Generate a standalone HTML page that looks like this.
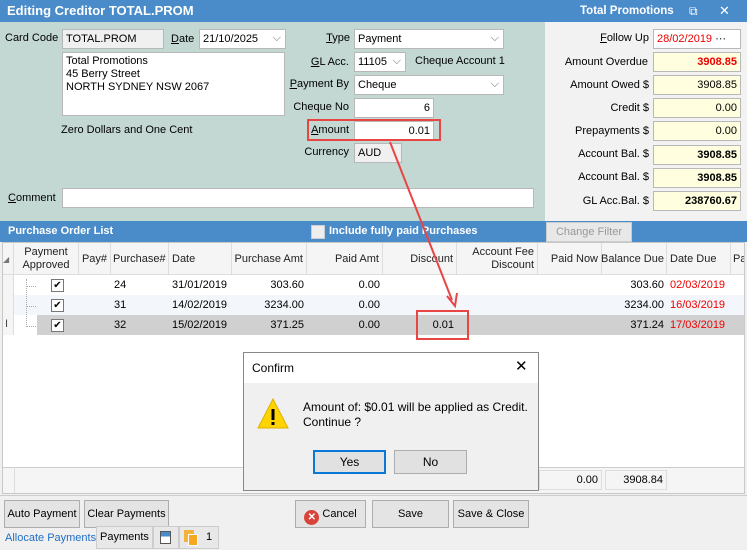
<!DOCTYPE html>
<html><head><style>
*{box-sizing:border-box;margin:0;padding:0}
body{width:747px;height:550px;overflow:hidden;font-family:"Liberation Sans",sans-serif;font-size:11px;color:#000;background:#f0f0f0;position:relative}
.a{position:absolute}
.lbl{position:absolute;font-size:11px;white-space:nowrap}
.lr{position:absolute;font-size:11px;white-space:nowrap;text-align:right}
.in{position:absolute;background:#fff;border:1px solid #b8b8b8;height:20px;padding:0 3px;line-height:18px;font-size:11px;white-space:nowrap;overflow:hidden}
.y{background:#ffffe0}
.r{text-align:right}
.dd::after{content:"⌵";position:absolute;right:4px;top:-1px;color:#666;font-size:11px}
.btn{position:absolute;background:#e4e4e4;border:1px solid #adadad;text-align:center;font-size:11px;line-height:26px;height:28px;white-space:nowrap}
.hd{position:absolute;top:243px;height:32px;border-right:1px solid #ddd;font-size:11px;color:#222;display:flex;align-items:center;line-height:13px;white-space:nowrap}
.cell{position:absolute;font-size:11px;height:20px;line-height:20px;white-space:nowrap}
.cb{position:absolute;width:13px;height:13px;border:1px solid #777;background:#fff;font-size:10px;line-height:11px;text-align:center}
</style></head><body>
<div class="a" style="left:0;top:0;width:747px;height:22px;background:#4a8bca"></div>
<div class="lbl" style="left:7px;top:3px;color:#fff;font-weight:bold;font-size:13px">Editing Creditor TOTAL.PROM</div>
<div class="lbl" style="left:580px;top:5px;color:#fff;font-weight:bold;font-size:11.5px">Total Promotions</div>
<div class="lbl" style="left:689px;top:4px;color:#fff;font-size:12px">⧉</div>
<div class="lbl" style="left:719px;top:3px;color:#fff;font-size:13px">✕</div>
<div class="a" style="left:0;top:22px;width:545px;height:199px;background:#c3d8d3"></div>
<div class="a" style="left:545px;top:22px;width:202px;height:199px;background:#f2f2f2"></div>
<div class="lbl" style="left:5px;top:32px">Card Code</div>
<div class="in" style="left:62px;top:29px;width:102px;background:#f0f0f0">TOTAL.PROM</div>
<div class="lbl" style="left:171px;top:33px"><u>D</u>ate</div>
<div class="in dd" style="left:199px;top:29px;width:87px">21/10/2025</div>
<div class="in" style="left:62px;top:52px;width:223px;height:64px;line-height:13px;padding-top:2px">Total Promotions<br>45 Berry Street<br>NORTH SYDNEY NSW 2067</div>
<div class="lbl" style="left:61px;top:124px">Zero Dollars and One Cent</div>
<div class="lbl" style="left:8px;top:192px"><u>C</u>omment</div>
<div class="in" style="left:62px;top:188px;width:472px"></div>
<div class="lr" style="right:397px;top:32px"><u>T</u>ype</div>
<div class="in dd" style="left:354px;top:29px;width:150px">Payment</div>
<div class="lr" style="right:398px;top:56px"><u>G</u>L Acc.</div>
<div class="in dd" style="left:354px;top:52px;width:52px">11105</div>
<div class="lbl" style="left:415px;top:55px">Cheque Account 1</div>
<div class="lr" style="right:398px;top:78px"><u>P</u>ayment By</div>
<div class="in dd" style="left:354px;top:75px;width:150px">Cheque</div>
<div class="lr" style="right:398px;top:101px">Cheque No</div>
<div class="in r" style="left:354px;top:98px;width:80px">6</div>
<div class="lr" style="right:398px;top:124px"><u>A</u>mount</div>
<div class="in r" style="left:354px;top:121px;width:80px">0.01</div>
<div class="lr" style="right:398px;top:146px">Currency</div>
<div class="in" style="left:354px;top:143px;width:48px;background:#f0f0f0">AUD</div>
<div class="a" style="left:307px;top:119px;width:134px;height:22px;border:2px solid #e84545"></div>
<div class="lr" style="right:98px;top:32px"><u>F</u>ollow Up</div>
<div class="in" style="left:653px;top:29px;width:88px;color:#e00">28/02/2019 <span style="color:#444">⋯</span></div>
<div class="lr" style="right:99px;top:56px">Amount Overdue</div>
<div class="in y r" style="left:653px;top:52px;width:88px;color:#e00;font-weight:bold">3908.85</div>
<div class="lr" style="right:98px;top:79px">Amount Owed $</div>
<div class="in y r" style="left:653px;top:75px;width:88px">3908.85</div>
<div class="lr" style="right:98px;top:102px">Credit $</div>
<div class="in y r" style="left:653px;top:98px;width:88px">0.00</div>
<div class="lr" style="right:98px;top:125px">Prepayments $</div>
<div class="in y r" style="left:653px;top:121px;width:88px">0.00</div>
<div class="lr" style="right:98px;top:148px">Account Bal. $</div>
<div class="in y r" style="left:653px;top:145px;width:88px;font-weight:bold">3908.85</div>
<div class="lr" style="right:98px;top:171px">Account Bal. $</div>
<div class="in y r" style="left:653px;top:168px;width:88px;font-weight:bold">3908.85</div>
<div class="lr" style="right:98px;top:195px">GL Acc.Bal. $</div>
<div class="in y r" style="left:653px;top:191px;width:88px;font-weight:bold">238760.67</div>
<div class="a" style="left:0;top:221px;width:747px;height:21px;background:#4a8bca"></div>
<div class="lbl" style="left:8px;top:225px;color:#fff;font-weight:bold">Purchase Order List</div>
<div class="a" style="left:311px;top:225px;width:14px;height:14px;background:#eee;border:1px solid #ccc"></div>
<div class="lbl" style="left:329px;top:225px;color:#fff;font-weight:bold">Include fully paid Purchases</div>
<div class="a" style="left:546px;top:222px;width:86px;height:20px;background:#e8e8e8;border:1px solid #ccc;color:#999;text-align:center;line-height:18px">Change Filter</div>
<div class="a" style="left:2px;top:242px;width:743px;height:252px;background:#fff;border:1px solid #c8c8c8"></div>
<div class="a" style="left:3px;top:243px;width:741px;height:32px;background:#f5f5f5;border-bottom:1px solid #ddd"></div>
<div class="hd" style="left:3px;width:11px;font-size:8px;color:#777">◢</div>
<div class="hd" style="left:14px;width:65px;justify-content:center;text-align:center">Payment<br>Approved</div>
<div class="hd" style="left:79px;width:32px;justify-content:center">Pay#</div>
<div class="hd" style="left:111px;width:58px;padding-left:2px">Purchase#</div>
<div class="hd" style="left:169px;width:63px;padding-left:3px">Date</div>
<div class="hd" style="left:232px;width:75px;justify-content:flex-end;padding-right:3px">Purchase Amt</div>
<div class="hd" style="left:307px;width:76px;justify-content:flex-end;padding-right:3px">Paid Amt</div>
<div class="hd" style="left:383px;width:74px;justify-content:flex-end;padding-right:3px">Discount</div>
<div class="hd" style="left:457px;width:81px;justify-content:flex-end;padding-right:3px;text-align:right">Account Fee<br>Discount</div>
<div class="hd" style="left:538px;width:64px;justify-content:flex-end;padding-right:3px">Paid Now</div>
<div class="hd" style="left:602px;width:65px;justify-content:flex-end;padding-right:2px">Balance Due</div>
<div class="hd" style="left:667px;width:64px;padding-left:3px">Date Due</div>
<div class="hd" style="left:731px;width:13px;padding-left:2px;border:none;overflow:hidden">Pa</div>
<div class="a" style="left:3px;top:275px;width:11px;height:60px;background:#f5f5f5;border-right:1px solid #ddd"></div>
<div class="a" style="left:14px;top:295px;width:730px;height:20px;background:#f3f6fa"></div>
<div class="a" style="left:37px;top:315px;width:707px;height:20px;background:#d0d0d0"></div>
<div class="a" style="left:26px;top:279px;width:1px;height:48px;border-left:1px dotted #aaa"></div>
<div class="a" style="left:26px;top:286px;width:10px;border-top:1px dotted #aaa"></div>
<div class="a" style="left:26px;top:306px;width:10px;border-top:1px dotted #aaa"></div>
<div class="a" style="left:26px;top:326px;width:10px;border-top:1px dotted #aaa"></div>
<div class="lbl" style="left:5px;top:318px;font-size:11px;color:#444">I</div>
<div class="cb" style="left:51px;top:279px">✔</div>
<div class="cb" style="left:51px;top:299px">✔</div>
<div class="cb" style="left:51px;top:319px">✔</div>
<div class="cell" style="left:114px;top:275px">24</div>
<div class="cell" style="left:172px;top:275px">31/01/2019</div>
<div class="cell" style="left:232px;top:275px;width:72px;text-align:right">303.60</div>
<div class="cell" style="left:307px;top:275px;width:73px;text-align:right">0.00</div>
<div class="cell" style="left:602px;top:275px;width:62px;text-align:right">303.60</div>
<div class="cell" style="left:670px;top:275px;color:#e00">02/03/2019</div>
<div class="cell" style="left:114px;top:295px">31</div>
<div class="cell" style="left:172px;top:295px">14/02/2019</div>
<div class="cell" style="left:232px;top:295px;width:72px;text-align:right">3234.00</div>
<div class="cell" style="left:307px;top:295px;width:73px;text-align:right">0.00</div>
<div class="cell" style="left:602px;top:295px;width:62px;text-align:right">3234.00</div>
<div class="cell" style="left:670px;top:295px;color:#e00">16/03/2019</div>
<div class="cell" style="left:114px;top:315px">32</div>
<div class="cell" style="left:172px;top:315px">15/02/2019</div>
<div class="cell" style="left:232px;top:315px;width:72px;text-align:right">371.25</div>
<div class="cell" style="left:307px;top:315px;width:73px;text-align:right">0.00</div>
<div class="cell" style="left:383px;top:315px;width:71px;text-align:right">0.01</div>
<div class="cell" style="left:602px;top:315px;width:62px;text-align:right">371.24</div>
<div class="cell" style="left:670px;top:315px;color:#e00">17/03/2019</div>
<div class="a" style="left:416px;top:310px;width:53px;height:30px;border:2px solid #e84545"></div>
<div class="a" style="left:3px;top:467px;width:741px;height:26px;background:#f5f5f5;border-top:1px solid #ccc"></div>
<div class="a" style="left:14px;top:467px;width:1px;height:26px;background:#ddd"></div>
<div class="in r" style="left:539px;top:470px;width:63px;background:#f5f5f5;border-color:#ddd">0.00</div>
<div class="in r" style="left:605px;top:470px;width:62px;background:#f5f5f5;border-color:#ddd">3908.84</div>
<svg class="a" style="left:0;top:0" width="747" height="550"><line x1="390" y1="142" x2="452" y2="300" stroke="#e84545" stroke-width="2"/><path d="M447 296 L455 306 L457 293" fill="none" stroke="#e84545" stroke-width="2"/></svg>
<div class="a" style="left:0;top:495px;width:747px;height:55px;background:#f0f0f0;border-top:1px solid #ccc"></div>
<div class="btn" style="left:4px;top:500px;width:76px">Auto Payment</div>
<div class="btn" style="left:84px;top:500px;width:85px">Clear Payments</div>
<div class="btn" style="left:295px;top:500px;width:71px"><span style="display:inline-block;width:15px;height:15px;border-radius:50%;background:#d9443a;color:#fff;font-size:10px;line-height:15px;vertical-align:-3px;font-weight:bold">✕</span> Cancel</div>
<div class="btn" style="left:372px;top:500px;width:77px">Save</div>
<div class="btn" style="left:453px;top:500px;width:76px">Save &amp; Close</div>
<div class="lbl" style="left:5px;top:532px;color:#1f6fc8">Allocate Payments</div>
<div class="a" style="left:96px;top:526px;width:57px;height:23px;background:#e8e8e8;border:1px solid #ccc;line-height:21px;padding-left:3px;white-space:nowrap">Payments</div>
<div class="a" style="left:153px;top:526px;width:26px;height:23px;background:#e8e8e8;border:1px solid #ccc"><div class="a" style="left:6px;top:4px;width:11px;height:13px;border:1px solid #555;background:linear-gradient(#4a8bca 0 40%,#fff 40%)"></div></div>
<div class="a" style="left:179px;top:526px;width:40px;height:23px;background:#e8e8e8;border:1px solid #ccc"><div class="a" style="left:4px;top:3px;width:10px;height:12px;background:#f4b43c"></div><div class="a" style="left:8px;top:7px;width:10px;height:12px;background:#f8a820;border:1px solid #fff"></div><span class="a" style="left:26px;top:4px">1</span></div>
<div class="a" style="left:243px;top:352px;width:296px;height:139px;background:#f0f0f0;border:1px solid #888"></div>
<div class="a" style="left:244px;top:353px;width:294px;height:30px;background:#fff"></div>
<div class="lbl" style="left:252px;top:361px;font-size:12px">Confirm</div>
<div class="lbl" style="left:515px;top:357px;font-size:15px">✕</div>
<svg class="a" style="left:256px;top:397px" width="34" height="34"><polygon points="17,2 32,31 2,31" fill="#ffd400" stroke="#e0b000"/><rect x="15.5" y="12" width="3" height="11" fill="#000"/><rect x="15.5" y="25" width="3" height="3" fill="#000"/></svg>
<div class="lbl" style="left:303px;top:400px;font-size:12px;line-height:15px">Amount of: $0.01 will be applied as Credit.<br>Continue ?</div>
<div class="a" style="left:313px;top:450px;width:73px;height:24px;background:#e1e1e1;border:2px solid #0a78d7;text-align:center;line-height:20px;font-size:12px">Yes</div>
<div class="a" style="left:394px;top:450px;width:73px;height:24px;background:#e1e1e1;border:1px solid #adadad;text-align:center;line-height:22px;font-size:12px">No</div>
</body></html>
